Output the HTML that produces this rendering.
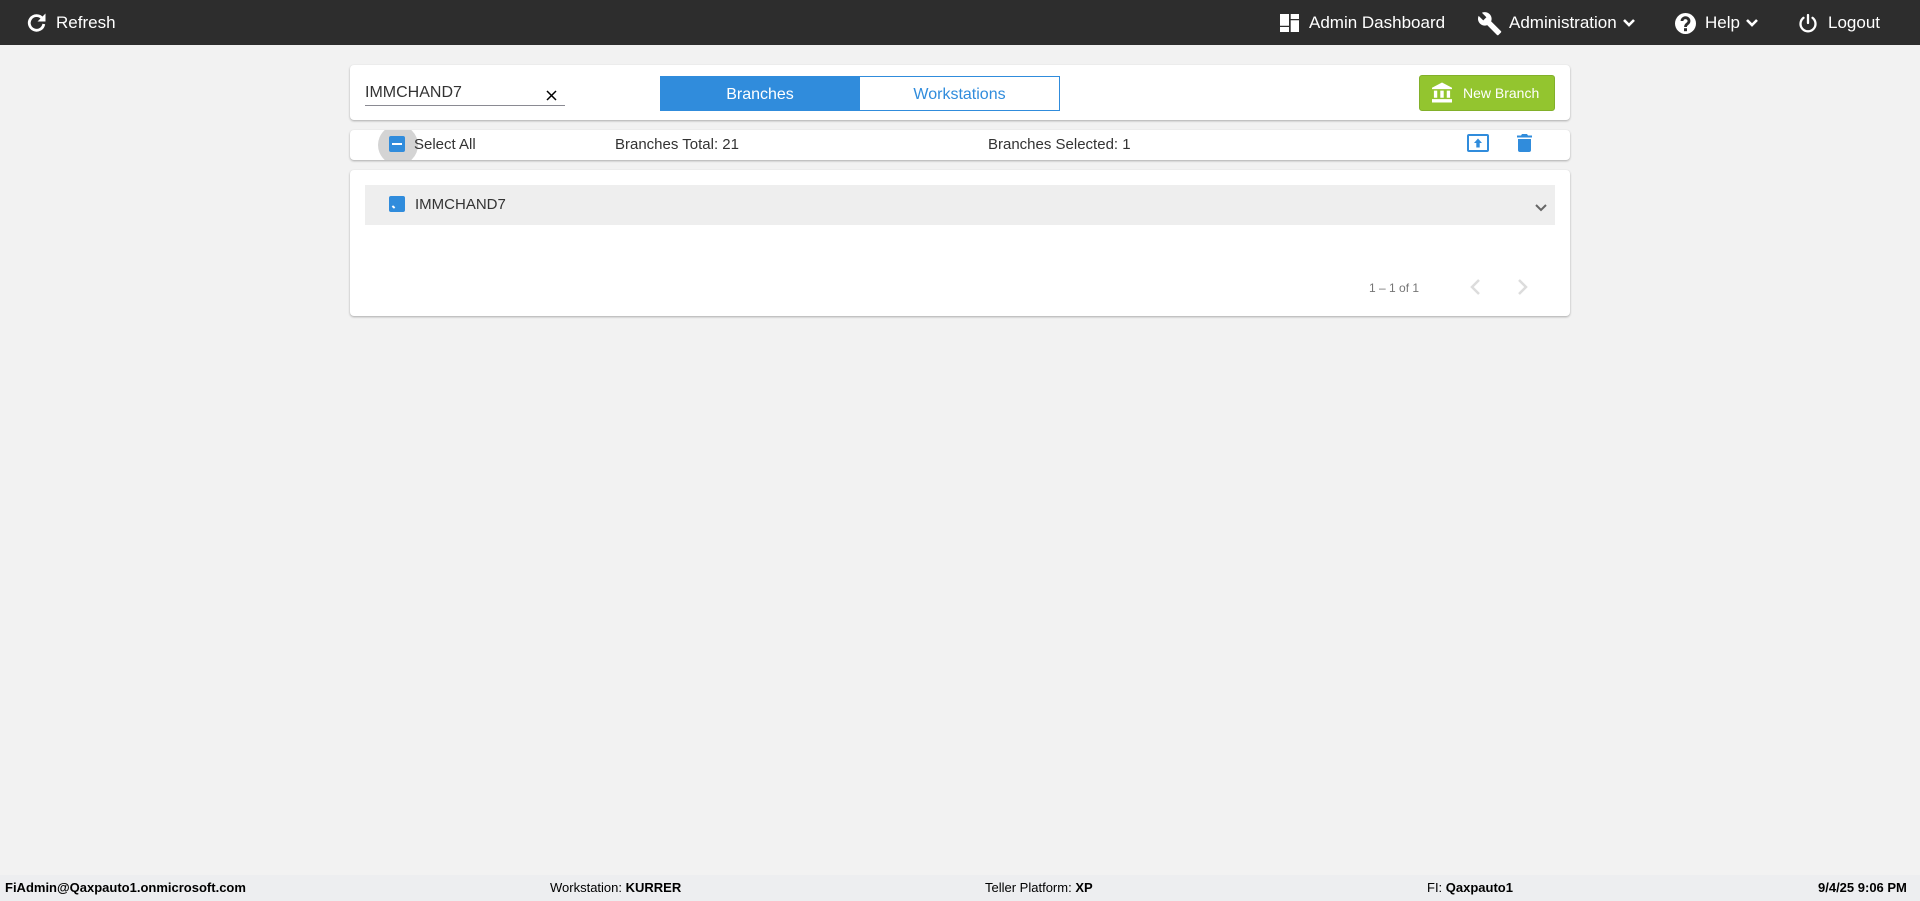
<!DOCTYPE html>
<html lang="en">
<head>
<meta charset="utf-8">
<title>Branches</title>
<style>
*{box-sizing:border-box}
html,body{margin:0;padding:0;width:1920px;height:901px;overflow:hidden;background:#f2f2f2;font-family:"Liberation Sans",sans-serif;color:#333}
.abs{position:absolute;white-space:nowrap}
#hdr{position:absolute;left:0;top:0;width:1920px;height:45px;background:#2d2d2d}
#hdr .t{position:absolute;top:14px;color:#fff;font-size:17px;line-height:18px;white-space:nowrap}
#hdr svg{position:absolute}
.card{position:absolute;left:350px;width:1220px;background:#fff;border-radius:4px;box-shadow:0 1px 2px rgba(0,0,0,.3)}
#ft{position:absolute;left:0;top:875px;width:1920px;height:26px;background:#edeef0;color:#000;font-size:13px}
#ft span{position:absolute;top:5px;line-height:15px;white-space:nowrap}
#ft b{font-weight:700}
</style>
</head>
<body>
<div id="hdr">
  <svg style="left:27px;top:13px" width="19" height="19" viewBox="0 0 19 19"><path fill="none" stroke="#fff" stroke-width="2.800" d="M15.200 5.300A7.300 7.300 0 1 0 16.800 11"/><path fill="#fff" d="M18.500 0.500v8h-8z"/></svg>
  <div class="t" style="left:56px">Refresh</div>

  <svg style="left:1280px;top:14px" width="19" height="18" viewBox="0 0 19 18"><path fill="#fff" d="M0 0h9v11.700H0zM0 13h9v5H0zM10.700 0H19v5h-8.300zM10.700 6.300H19V18h-8.300z"/></svg>
  <div class="t" style="left:1309px">Admin Dashboard</div>

  <svg style="left:1477px;top:11px" width="25" height="25" viewBox="0 0 24 24"><path fill="#fff" d="M23 19.300L13.600 9.900c.9-2.300.4-5-1.500-6.900-2-2-5-2.400-7.400-1.300L9 6 6 9 1.600 4.700C.4 7.100.9 10.100 2.900 12.100c1.900 1.900 4.600 2.400 6.900 1.500l9.400 9.400c.4.400 1 .4 1.400 0l2.300-2.300c.5-.4.500-1.100.1-1.400z"/></svg>
  <div class="t" style="left:1509px">Administration</div>
  <svg style="left:1622px;top:18px" width="14" height="10" viewBox="0 0 14 10"><path fill="none" stroke="#fff" stroke-width="2.600" d="M2 2l5 5 5-5"/></svg>

  <svg style="left:1675px;top:13px" width="21" height="21" viewBox="0 0 21 21"><circle cx="10.500" cy="10.500" r="10.500" fill="#fff"/><path fill="none" stroke="#2d2d2d" stroke-width="2.800" d="M7 8a3.500 3.300 0 1 1 5.500 2.700c-1.300.9-2 1.500-2 3.300"/><rect x="9" y="15.200" width="3" height="3" fill="#2d2d2d"/></svg>
  <div class="t" style="left:1705px">Help</div>
  <svg style="left:1745px;top:18px" width="14" height="10" viewBox="0 0 14 10"><path fill="none" stroke="#fff" stroke-width="2.600" d="M2 2l5 5 5-5"/></svg>

  <svg style="left:1797px;top:12px" width="22" height="22" viewBox="0 0 22 22"><path fill="none" stroke="#fff" stroke-width="2.300" stroke-linecap="round" d="M11 3v8M6.500 5.800a7.500 7.500 0 1 0 9 0"/></svg>
  <div class="t" style="left:1828px">Logout</div>
</div>

<div class="card" style="top:65px;height:55px"></div>
<div class="abs" style="left:365px;top:84px;font-size:16px;line-height:18px;color:#333">IMMCHAND7</div>
<div class="abs" style="left:365px;top:105px;width:200px;height:1px;background:#8a8a92"></div>
<svg class="abs" style="left:546px;top:90px" width="11" height="11" viewBox="0 0 11 11"><path fill="none" stroke="#000" stroke-width="1.500" d="M1 1l9 9M10 1l-9 9"/></svg>

<div class="abs" style="left:660px;top:76px;width:200px;height:35px;background:#308cdc;color:#fff;font-size:16px;line-height:37px;text-align:center">Branches</div>
<div class="abs" style="left:860px;top:76px;width:200px;height:35px;background:#fff;border:1px solid #308cdc;border-left:0;color:#308cdc;font-size:16px;line-height:35px;text-align:center">Workstations</div>

<div class="abs" style="left:1419px;top:75px;width:136px;height:36px;background:#93c52f;border:1px solid #82b02a;border-radius:3px"></div>
<svg class="abs" style="left:1432px;top:82px" width="20" height="21" viewBox="0 0 21 21"><path fill="#fff" d="M10.500 0L21 5.500V7H0V5.500zM2 8.500h3.500V16H2zM8.700 8.500h3.600V16H8.700zM15.500 8.500H19V16h-3.500zM0 17.500h21V21H0z"/></svg>
<div class="abs" style="left:1463px;top:85px;color:#fff;font-size:14px;line-height:16px">New Branch</div>

<div class="card" style="top:130px;height:30px"></div>
<div class="abs" style="left:378px;top:130px;width:40px;height:30px;overflow:hidden"><div style="position:absolute;left:0;top:-5px;width:40px;height:40px;border-radius:50%;background:#d4d4d4"></div></div>
<div class="abs" style="left:389px;top:136px;width:16px;height:16px;background:#308cdc;border-radius:2px"><div style="position:absolute;left:3px;top:7px;width:10px;height:2px;background:#fff"></div></div>
<div class="abs" style="left:414px;top:136px;font-size:15px;line-height:17px;color:#333">Select All</div>
<div class="abs" style="left:615px;top:136px;font-size:15px;line-height:17px;color:#333">Branches Total: 21</div>
<div class="abs" style="left:988px;top:136px;font-size:15px;line-height:17px;color:#333">Branches Selected: 1</div>
<svg class="abs" style="left:1467px;top:134px" width="22" height="18" viewBox="0 0 22 18"><rect x="1" y="1" width="20" height="16" rx="1" fill="none" stroke="#308cdc" stroke-width="2"/><path fill="#308cdc" d="M11 4.500L15 9h-2.300v4.500H9.300V9H7z"/></svg>
<svg class="abs" style="left:1517px;top:134px" width="15" height="18" viewBox="0 0 15 18"><path fill="#308cdc" d="M5 0h5l1 1.500h4v2H0v-2h4zM1 5h13v11a2 2 0 0 1-2 2H3a2 2 0 0 1-2-2z"/></svg>

<div class="card" style="top:170px;height:146px"></div>
<div class="abs" style="left:365px;top:185px;width:1190px;height:40px;background:#eee"></div>
<div class="abs" style="left:389px;top:196px;width:16px;height:16px;background:#308cdc;border-radius:2px"><div style="position:absolute;left:3px;top:10px;width:3px;height:2px;background:#fff;transform:rotate(40deg)"></div></div>
<div class="abs" style="left:415px;top:196px;font-size:15px;line-height:17px;color:#333">IMMCHAND7</div>
<svg class="abs" style="left:1534px;top:203px" width="14" height="10" viewBox="0 0 14 10"><path fill="none" stroke="#666" stroke-width="2" d="M2 2l5 5 5-5"/></svg>

<div class="abs" style="left:1369px;top:281px;font-size:12px;line-height:14px;color:#757575">1 – 1 of 1</div>
<svg class="abs" style="left:1468px;top:277px" width="14" height="20" viewBox="0 0 14 20"><path fill="none" stroke="#dcdcdc" stroke-width="2.500" d="M11 3L4 10l7 7"/></svg>
<svg class="abs" style="left:1516px;top:277px" width="14" height="20" viewBox="0 0 14 20"><path fill="none" stroke="#dcdcdc" stroke-width="2.500" d="M3 3l7 7-7 7"/></svg>

<div id="ft">
  <span style="left:5px"><b>FiAdmin@Qaxpauto1.onmicrosoft.com</b></span>
  <span style="left:550px">Workstation: <b>KURRER</b></span>
  <span style="left:985px">Teller Platform: <b>XP</b></span>
  <span style="left:1427px">FI: <b>Qaxpauto1</b></span>
  <span style="left:1818px"><b>9/4/25 9:06 PM</b></span>
</div>
</body>
</html>
